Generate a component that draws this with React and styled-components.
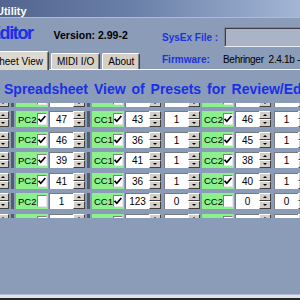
import React from "react";
import styled, { createGlobalStyle } from "styled-components";

const GlobalStyle = createGlobalStyle`
  html, body { margin: 0; padding: 0; }
  body { background: #8a9cb7; font-family: "Liberation Sans", Arial, sans-serif; }
`;

const Screen = styled.div`
  width: 300px;
  height: 300px;
  overflow: hidden;
  background: #8a9cb7;
  display: flex;
  flex-direction: column;
`;

const TitleBar = styled.div`
  flex: none;
  height: 18px;
  box-sizing: border-box;
  padding-top: 5px;
  background: linear-gradient(90deg, #52658f 0%, #6b80a8 45%, #a3b6d6 100%);
  border-bottom: 1px solid #aebcd2;
  display: flex;
  align-items: flex-start;
`;

const TitleText = styled.span`
  color: #fff;
  font-weight: bold;
  font-size: 11px;
  line-height: 13px;
  margin-left: -4px;
`;

const Header = styled.div`
  flex: none;
  height: 51px;
  display: flex;
`;

const LeftCol = styled.div`
  width: 160px;
  flex: none;
  display: flex;
  flex-direction: column;
`;

const BrandRow = styled.div`
  height: 33px;
  box-sizing: border-box;
  padding-top: 5px;
  display: flex;
  align-items: baseline;
`;

const AppName = styled.span`
  font-size: 18px;
  line-height: 20px;
  font-weight: bold;
  letter-spacing: -1.4px;
  color: #1b30e6;
  margin-left: -11px;
  white-space: nowrap;
`;

const Version = styled.span`
  font-size: 10.5px;
  font-weight: bold;
  color: #000;
  margin-left: 21px;
  white-space: pre;
`;

const TabStrip = styled.div`
  height: 18px;
  display: flex;
  align-items: flex-end;
  gap: 2px;
`;

const Tab = styled.div`
  position: relative;
  z-index: 1;
  box-sizing: border-box;
  height: ${(p) => (p.$active ? "19px" : "16px")};
  margin-bottom: ${(p) => (p.$active ? "-1px" : "0")};
  margin-left: ${(p) => p.$shift || 0}px;
  padding: ${(p) => (p.$active ? "3px" : "1px")} 5px 0 5px;
  background: ${(p) => (p.$active ? "#dcd9d2" : "#d4d0c8")};
  border-top: 1px solid #fff;
  border-left: 1px solid #fff;
  border-right: 1px solid #404040;
  box-shadow: inset -1px 0 #808080;
  border-radius: 2px 2px 0 0;
  font-size: 10px;
  line-height: 14px;
  color: #000;
  white-space: nowrap;
`;

const RightCol = styled.div`
  flex: 1;
  min-width: 0;
  padding-left: 2px;
  display: flex;
  flex-direction: column;
`;

const SysExRow = styled.div`
  margin-top: 9px;
  height: 20px;
  display: flex;
  align-items: center;
  gap: 6px;
`;

const BlueLabel = styled.span`
  font-size: 10px;
  font-weight: bold;
  color: #1d33dc;
  white-space: nowrap;
  min-width: ${(p) => p.$min || 0}px;
`;

const PathBox = styled.div`
  flex: 1;
  height: 20px;
  box-sizing: border-box;
  margin-right: -12px;
  background: #aab4c6;
  border-top: 1px solid #7c8496;
  border-left: 1px solid #7c8496;
  border-bottom: 1px solid #e8ecf2;
  border-right: 1px solid #e8ecf2;
  box-shadow: inset 1px 1px #3c3c44;
`;

const FirmwareRow = styled.div`
  margin-top: 7px;
  height: 12px;
  display: flex;
  align-items: center;
  line-height: 12px;
`;

const FirmwareValue = styled.span`
  font-size: 10px;
  letter-spacing: -0.3px;
  color: #000;
  white-space: pre;
`;

const Panel = styled.div`
  flex: 1;
  min-height: 0;
  border-top: 1px solid #fff;
  display: flex;
  flex-direction: column;
`;

const Heading = styled.h1`
  margin: 0;
  padding: 10px 0 0 4px;
  font-size: 14px;
  line-height: 18px;
  font-weight: bold;
  word-spacing: 2px;
  color: #1b30e6;
  white-space: nowrap;
`;

const GridViewport = styled.div`
  flex: none;
  margin-top: 5px;
  height: 115px;
  overflow: hidden;
`;

const RowList = styled.div`
  display: flex;
  flex-direction: column;
  gap: 4.5px;
  margin-top: -12.5px;
`;

const Row = styled.div`
  display: flex;
  gap: 2px;
  height: 16px;
  flex: none;
  width: max-content;
`;

const Divider = styled.div`
  width: 3px;
  background: #535c6e;
`;

const Group = styled.div`
  display: flex;
  gap: 3px;
`;

const Pair = styled.div`
  display: flex;
  gap: 1px;
`;

const TagCell = styled.div`
  width: 32px;
  box-sizing: border-box;
  background: #8cf08c;
  display: flex;
  align-items: center;
  justify-content: space-between;
  padding: 0 1px 0 2px;
  font-size: 9.5px;
  color: #000;
  overflow: hidden;
`;

const CheckBox = styled.div`
  width: 10px;
  height: 12px;
  flex: none;
  margin-left: auto;
  box-sizing: border-box;
  background: #fff;
  border-top: 1px solid #808080;
  border-left: 1px solid #808080;
  border-bottom: 1px solid #e8e8e8;
  border-right: 1px solid #e8e8e8;
  display: flex;
  align-items: center;
  justify-content: center;
`;

const NumWrap = styled.div`
  display: flex;
  margin-left: ${(p) => p.$shift || 0}px;
`;

const Field = styled.div`
  width: 24px;
  box-sizing: border-box;
  background: #fff;
  border-top: 1px solid #7a7a7a;
  border-left: 1px solid #7a7a7a;
  display: flex;
  align-items: center;
  justify-content: center;
  font-size: 10px;
  color: #000;
`;

const SpinBox = styled.div`
  width: 12px;
  display: grid;
  grid-template-rows: 1fr 1fr;
`;

const SpinButton = styled.div`
  box-sizing: border-box;
  background: #d4d0c8;
  border-top: 1px solid #fff;
  border-left: 1px solid #fff;
  border-right: 1px solid #404040;
  border-bottom: 1px solid #404040;
  display: flex;
  align-items: center;
  justify-content: center;
`;

const Arrow = styled.span`
  width: 0;
  height: 0;
  border-left: 2px solid transparent;
  border-right: 2px solid transparent;
  ${(p) =>
    p.$up ? "border-bottom: 2px solid #000;" : "border-top: 2px solid #000;"}
`;

const Footer = styled.div`
  flex: none;
  height: 3px;
  background: #e0e4ea;
  border-top: 1px solid #b0bccc;
  border-bottom: 2px solid #262626;
`;

function Spinner() {
  return (
    <SpinBox>
      <SpinButton>
        <Arrow $up />
      </SpinButton>
      <SpinButton>
        <Arrow />
      </SpinButton>
    </SpinBox>
  );
}

function NumField({ value, shift }) {
  return (
    <NumWrap $shift={shift}>
      <Field>{value}</Field>
      <Spinner />
    </NumWrap>
  );
}

function Tag({ label, checked }) {
  return (
    <TagCell>
      {label && <span>{label}</span>}
      <CheckBox>
        {checked && (
          <svg width="8" height="8" viewBox="0 0 8 8">
            <path d="M0.6 3.8 L2.8 6.2 L7.4 1" stroke="#000" strokeWidth="1.7" fill="none" />
          </svg>
        )}
      </CheckBox>
    </TagCell>
  );
}

/* Rows 0 and 6 are only partly scrolled into view: their cells show, their text does not. */
const rows = [
  { hidden: true, pc: [false, ""], cc1: [false, "", ""], cc2: [false, "", ""] },
  { pc: [true, 47], cc1: [true, 43, 1], cc2: [true, 46, 1] },
  { pc: [true, 46], cc1: [true, 36, 1], cc2: [true, 45, 1] },
  { pc: [true, 39], cc1: [true, 41, 1], cc2: [true, 38, 1] },
  { pc: [true, 41], cc1: [true, 36, 1], cc2: [true, 40, 1] },
  { pc: [false, 1], cc1: [true, 123, 0], cc2: [false, 0, 0] },
  { hidden: true, pc: [false, ""], cc1: [false, "", ""], cc2: [false, "", ""] },
];

function PresetRow({ r }) {
  const lbl = (t) => (r.hidden ? "" : t);
  return (
    <Row>
      <NumField value="" shift={-27} />
      <Divider />
      <Pair>
        <Tag label={lbl("PC2")} checked={r.pc[0]} />
        <NumField value={r.pc[1]} />
      </Pair>
      <Divider />
      <Group>
        <Pair>
          <Tag label={lbl("CC1")} checked={r.cc1[0]} />
          <NumField value={r.cc1[1]} />
        </Pair>
        <NumField value={r.cc1[2]} />
      </Group>
      <Group>
        <Pair>
          <Tag label={lbl("CC2")} checked={r.cc2[0]} />
          <NumField value={r.cc2[1]} />
        </Pair>
        <NumField value={r.cc2[2]} />
      </Group>
    </Row>
  );
}

export default function App() {
  return (
    <>
      <GlobalStyle />
      <Screen>
        <TitleBar>
          <TitleText>Utility</TitleText>
        </TitleBar>
        <Header>
          <LeftCol>
            <BrandRow>
              <AppName>Editor</AppName>
              <Version>Version: 2.99-2</Version>
            </BrandRow>
            <TabStrip>
              <Tab $active $shift={-44}>Spreadsheet View</Tab>
              <Tab>MIDI I/O</Tab>
              <Tab>About</Tab>
            </TabStrip>
          </LeftCol>
          <RightCol>
            <SysExRow>
              <BlueLabel>SysEx File :</BlueLabel>
              <PathBox />
            </SysExRow>
            <FirmwareRow>
              <BlueLabel $min={61}>Firmware:</BlueLabel>
              <FirmwareValue>Behringer  2.4.1b - 2.4.1b</FirmwareValue>
            </FirmwareRow>
          </RightCol>
        </Header>
        <Panel>
          <Heading>Spreadsheet View of Presets for Review/Edit</Heading>
          <GridViewport>
            <RowList>
              {rows.map((r, i) => (
                <PresetRow key={i} r={r} />
              ))}
            </RowList>
          </GridViewport>
        </Panel>
        <Footer />
      </Screen>
    </>
  );
}
